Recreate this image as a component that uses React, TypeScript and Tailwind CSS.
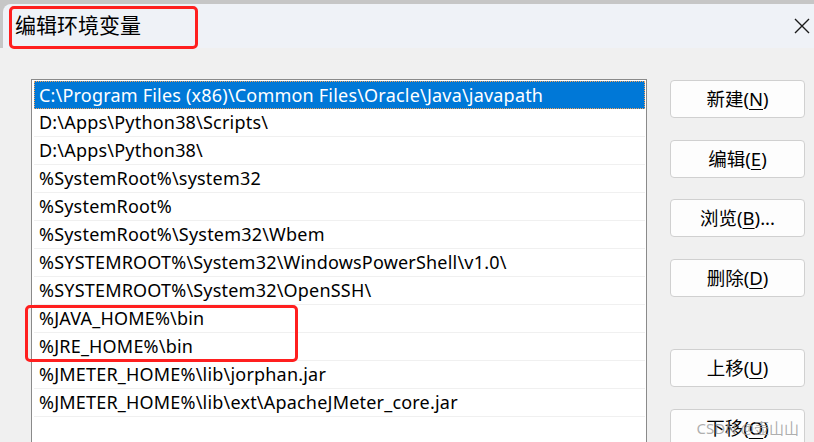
import { Fragment } from "react";

const paths = [
  "C:\\Program Files (x86)\\Common Files\\Oracle\\Java\\javapath",
  "D:\\Apps\\Python38\\Scripts\\",
  "D:\\Apps\\Python38\\",
  "%SystemRoot%\\system32",
  "%SystemRoot%",
  "%SystemRoot%\\System32\\Wbem",
  "%SYSTEMROOT%\\System32\\WindowsPowerShell\\v1.0\\",
  "%SYSTEMROOT%\\System32\\OpenSSH\\",
  "%JAVA_HOME%\\bin",
  "%JRE_HOME%\\bin",
  "%JMETER_HOME%\\lib\\jorphan.jar",
  "%JMETER_HOME%\\lib\\ext\\ApacheJMeter_core.jar",
  "",
];

const buttons = [
  { pre: "新建(", key: "N", post: ")", mt: "mt-0" },
  { pre: "编辑(", key: "E", post: ")", mt: "mt-[22px]" },
  { pre: "浏览(", key: "B", post: ")...", mt: "mt-[21px]" },
  { pre: "删除(", key: "D", post: ")", mt: "mt-[22px]" },
  { pre: "上移(", key: "U", post: ")", mt: "mt-[52px]" },
  { pre: "下移(", key: "O", post: ")", mt: "mt-[22px]" },
];

const font = "font-['Noto_Sans','Noto_Sans_CJK_SC',sans-serif]";

export default function App() {
  return (
    <div className={`relative w-[814px] h-[442px] overflow-hidden bg-[#f0f0f0] ${font}`}>
      {/* title bar */}
      <div className="h-[48px] bg-[#c6c6c6] pt-[4px] pl-[3px]">
        <div className="h-full rounded-tl-[8px] bg-[#eff2f7] flex items-center justify-between pl-[12px] pr-[4px]">
          <span className="text-[21px] leading-none text-black pb-[2px]">编辑环境变量</span>
          <svg width="16" height="16" viewBox="0 0 16 16">
            <path d="M1 1 L15 15 M15 1 L1 15" stroke="#1a1a1a" strokeWidth="1.4" />
          </svg>
        </div>
      </div>

      {/* body */}
      <div className="flex pt-[31px] pl-[31px]">
        <div className="w-[616px] h-[400px] border border-[#8a8a8a] bg-white p-[1px] pl-[2px]">
          {paths.map((p, i) => (
            <div
              key={i}
              className={`h-[28px] flex items-center pl-[5px] text-[18px] tracking-[0.2px] whitespace-nowrap ${
                i === 0
                  ? "bg-[#0078d7] text-white outline-1 outline-dotted outline-[#f5a35a] -outline-offset-1"
                  : "text-black border-b border-[#f0f0f0]"
              }`}
            >
              {p}
            </div>
          ))}
        </div>

        <div className="flex flex-col ml-[23px] pt-[1px]">
          {buttons.map((b, i) => (
            <button
              key={i}
              className={`${b.mt} w-[135px] h-[38px] rounded-[4px] border border-[#d0d0d0] bg-[#fdfdfd] text-[18.5px] text-black flex items-center justify-center leading-none`}
            >
              <Fragment>
                {b.pre}
                <span className="underline underline-offset-[3px]">{b.key}</span>
                {b.post}
              </Fragment>
            </button>
          ))}
        </div>
      </div>

      {/* annotation boxes */}
      <div className="absolute left-[9px] top-[6px] w-[189px] h-[43px] border-[3px] border-[#ff1f1f] rounded-[5px]" />
      <div className="absolute left-[25px] top-[305px] w-[273px] h-[57px] border-[3px] border-[#ff1f1f] rounded-[5px]" />

      {/* watermark */}
      <div className="absolute right-[15px] bottom-[3px] text-[15px] text-[#9a9a9a]/80 leading-none pb-[3px]">
        CSDN @壶山山
      </div>
    </div>
  );
}
